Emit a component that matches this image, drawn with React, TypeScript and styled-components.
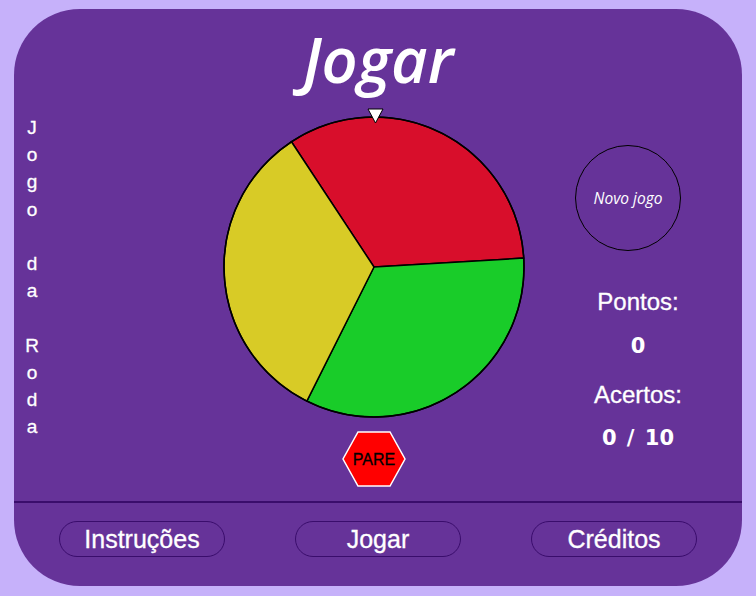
import React from "react";
import styled, { createGlobalStyle } from "styled-components";

const GlobalStyle = createGlobalStyle`
  html, body {
    margin: 0;
    padding: 0;
    background: #c6b1fa;
  }
  body {
    font-family: "Liberation Sans", Arial, sans-serif;
  }
  * { box-sizing: border-box; }
`;

const Page = styled.div`
  width: 756px;
  height: 596px;
  padding: 9px 14px 10px;
  background: #c6b1fa;
`;

const Card = styled.div`
  width: 728px;
  height: 577px;
  background: #663399;
  border-radius: 66px;
  padding-top: 17px;
  display: flex;
  flex-direction: column;
  overflow: hidden;
  color: #ffffff;
`;

const Title = styled.h1`
  margin: 0;
  height: 64px;
  font-family: "Open Sans", sans-serif;
  font-style: italic;
  font-weight: 600;
  font-size: 63px;
  line-height: 66px;
  text-align: center;
  color: #ffffff;
`;

const Main = styled.main`
  flex: 1;
  display: grid;
  grid-template-columns: 208px 304px 1fr;
`;

const SideTitle = styled.div`
  width: 36px;
  margin-top: 24px;
  display: flex;
  flex-direction: column;
  align-items: center;
  font-size: 19px;
  line-height: 27.2px;
  color: #ffffff;
  -webkit-text-stroke: 0.3px #ffffff;
`;

const Letter = styled.span`
  display: block;
  height: 27.2px;
`;

const WheelCol = styled.div`
  display: flex;
  flex-direction: column;
  align-items: center;
  padding-top: 17px;
`;

const WheelSvg = styled.svg`
  display: block;
  width: 304px;
  height: 312px;
`;

const StopButton = styled.button`
  margin-top: 12px;
  width: 64px;
  height: 56px;
  padding: 0;
  border: none;
  background: none;
  cursor: pointer;
  svg { display: block; }
  text {
    font-family: "Liberation Sans", Arial, sans-serif;
    font-size: 16px;
    fill: #000000;
    stroke: #000000;
    stroke-width: 0.3px;
  }
`;

const SideCol = styled.aside`
  display: flex;
  flex-direction: column;
  align-items: center;
  padding-left: 8px;
  padding-top: 55px;
`;

const NewGame = styled.button`
  width: 106px;
  height: 106px;
  margin-right: 20px;
  border-radius: 50%;
  border: 1.5px solid #000000;
  background: transparent;
  color: #ffffff;
  font-family: "Open Sans", sans-serif;
  font-style: italic;
  font-weight: 500;
  font-size: 15.5px;
  cursor: pointer;
  padding: 0;
`;

const StatLabel = styled.div<{ $gap: number }>`
  margin-top: ${(p) => p.$gap}px;
  font-size: 24px;
  line-height: 28.8px;
  -webkit-text-stroke: 0.3px #ffffff;
`;

const StatValue = styled.div`
  margin-top: 15px;
  font-family: "DejaVu Sans", sans-serif;
  font-weight: bold;
  font-size: 21px;
  line-height: 28.8px;
  word-spacing: 3px;
`;

const Footer = styled.nav`
  height: 85px;
  border-top: 2px solid #3a0d6c;
  padding: 18px 10px 0;
  display: grid;
  grid-template-columns: repeat(3, 1fr);
  justify-items: center;
  align-items: start;
`;

const NavButton = styled.button`
  width: 166px;
  height: 36px;
  border-radius: 18px;
  border: 1.5px solid #3a0d6c;
  background: transparent;
  color: #ffffff;
  font-family: "Liberation Sans", Arial, sans-serif;
  font-size: 25px;
  line-height: 1;
  padding: 0;
  cursor: pointer;
  -webkit-text-stroke: 0.3px #ffffff;
`;

const C = { x: 152, y: 160 };
const R = 150;
const pt = (deg: number) => {
  const a = (deg * Math.PI) / 180;
  return { x: C.x + R * Math.cos(a), y: C.y + R * Math.sin(a) };
};

const sectors = [
  { from: -123.4, to: -3.4, color: "#d80e2b" },
  { from: -3.4, to: 116.6, color: "#19cc29" },
  { from: 116.6, to: 236.6, color: "#d8cb26" },
];

const sectorPath = (from: number, to: number) => {
  const p1 = pt(from);
  const p2 = pt(to);
  return `M ${C.x} ${C.y} L ${p1.x.toFixed(2)} ${p1.y.toFixed(2)} A ${R} ${R} 0 0 1 ${p2.x.toFixed(2)} ${p2.y.toFixed(2)} Z`;
};

const sideText = "Jogo da Roda".split("");

export default function App() {
  return (
    <>
      <GlobalStyle />
      <Page>
        <Card>
          <Title>Jogar</Title>
          <Main>
            <SideTitle>
              {sideText.map((ch, i) => (
                <Letter key={i}>{ch === " " ? "\u00a0" : ch}</Letter>
              ))}
            </SideTitle>
            <WheelCol>
              <WheelSvg viewBox="0 0 304 312">
                {sectors.map((s, i) => (
                  <path
                    key={i}
                    d={sectorPath(s.from, s.to)}
                    fill={s.color}
                    stroke="#000000"
                    strokeWidth={1.5}
                    strokeLinejoin="round"
                  />
                ))}
                <circle cx={C.x} cy={C.y} r={R} fill="none" stroke="#000000" strokeWidth={1.5} />
                <polygon points="146,2 161,2 153.5,16" fill="#ffffff" stroke="#000000" strokeWidth={1} />
              </WheelSvg>
              <StopButton>
                <svg width="64" height="56" viewBox="0 0 64 56">
                  <polygon
                    points="16,1 48,1 63,28 48,55 16,55 1,28"
                    fill="#ff0000"
                    stroke="#ffffff"
                    strokeWidth={1.5}
                  />
                  <text x="32" y="34" textAnchor="middle">PARE</text>
                </svg>
              </StopButton>
            </WheelCol>
            <SideCol>
              <NewGame>Novo jogo</NewGame>
              <StatLabel $gap={37}>Pontos:</StatLabel>
              <StatValue>0</StatValue>
              <StatLabel $gap={20}>Acertos:</StatLabel>
              <StatValue>0 / 10</StatValue>
            </SideCol>
          </Main>
          <Footer>
            <NavButton>Instruções</NavButton>
            <NavButton>Jogar</NavButton>
            <NavButton>Créditos</NavButton>
          </Footer>
        </Card>
      </Page>
    </>
  );
}
